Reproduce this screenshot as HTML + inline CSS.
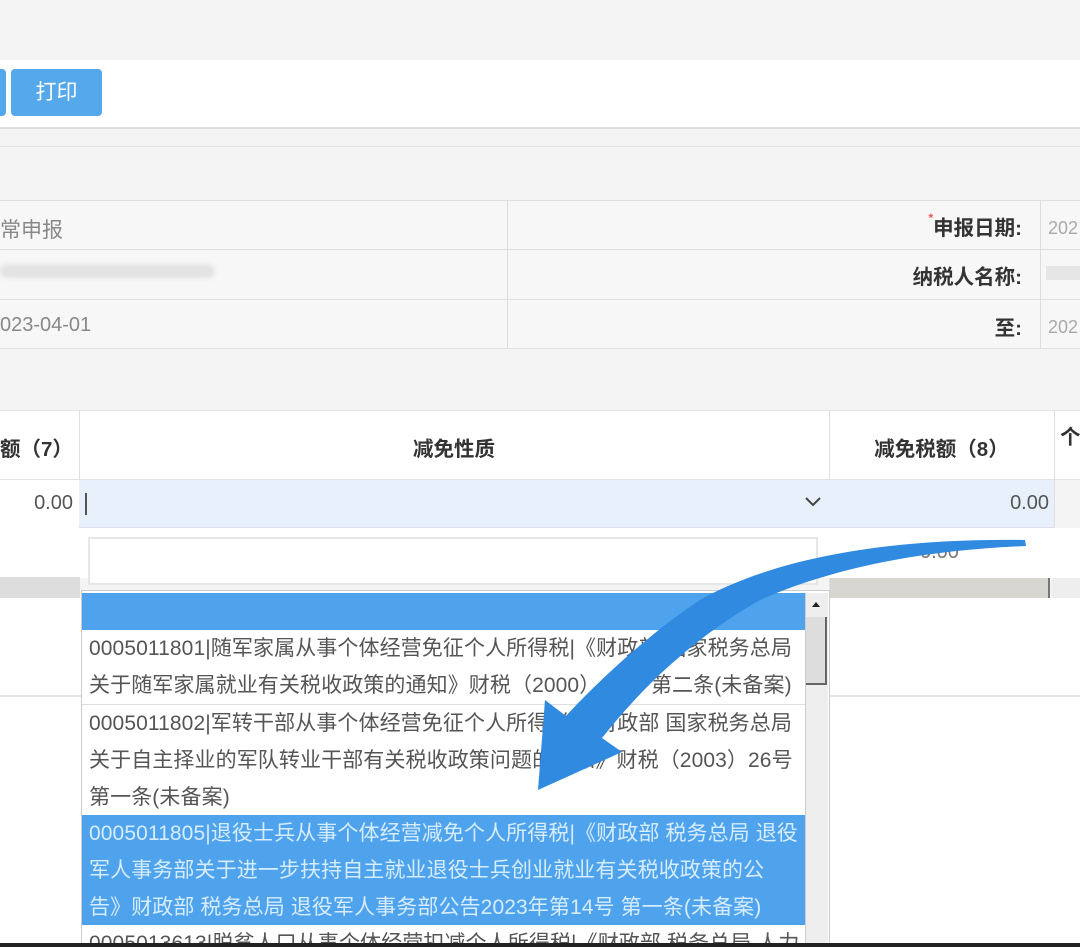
<!DOCTYPE html>
<html><head><meta charset="utf-8"><style>
*{margin:0;padding:0;box-sizing:border-box}
body{width:1080px;height:947px;overflow:hidden;background:#f4f4f4;position:relative;font-family:"Liberation Sans","Noto Sans CJK SC",sans-serif;color:#444}
.a{position:absolute}
.lbl{font-weight:bold;color:#333;font-size:20.5px;text-align:right}
.it{font-size:21px;line-height:37px;color:#555;padding-left:7px;white-space:nowrap;overflow:hidden;letter-spacing:0.1px}
</style></head><body>
<div class="a" style="left:0;top:60px;width:1080px;height:69px;background:#fff;border-bottom:2px solid #ddd"></div>
<div class="a" style="left:0;top:69px;width:6px;height:47px;background:#55a8ea;border-radius:0 4px 4px 0"></div>
<div class="a" style="left:11px;top:69px;width:91px;height:47px;background:#55a8ea;border-radius:4px;color:#fff;font-size:21px;line-height:47px;text-align:center">打印</div>
<div class="a" style="left:0;top:146px;width:1080px;height:1px;background:#e2e2e2"></div>
<div class="a" style="left:0;top:200px;width:1080px;height:149px;background:#f7f7f7;border-top:1px solid #e0e0e0;border-bottom:1px solid #e0e0e0"></div>
<div class="a" style="left:0;top:249px;width:1080px;height:1px;background:#e0e0e0"></div>
<div class="a" style="left:0;top:299px;width:1080px;height:1px;background:#e0e0e0"></div>
<div class="a" style="left:507px;top:200px;width:1px;height:149px;background:#ddd"></div>
<div class="a" style="left:1040px;top:200px;width:1px;height:149px;background:#ddd"></div>
<div class="a" style="left:0;top:214px;font-size:21px;color:#888">常申报</div>
<div class="a" style="left:0;top:264px;width:215px;height:14px;background:#e3e3e3;border-radius:7px;filter:blur(2px)"></div>
<div class="a" style="left:0;top:314px;font-size:20px;color:#888">023-04-01</div>
<div class="a lbl" style="left:800px;top:211px;width:222px"><span style="color:#e55;font-size:12px;vertical-align:top">*</span>申报日期:</div>
<div class="a lbl" style="left:800px;top:260px;width:222px">纳税人名称:</div>
<div class="a lbl" style="left:800px;top:311px;width:222px">至:</div>
<div class="a" style="left:1048px;top:218px;font-size:18px;color:#aaa">202</div>
<div class="a" style="left:1046px;top:266px;width:34px;height:14px;background:#e6e6e6"></div>
<div class="a" style="left:1048px;top:317px;font-size:18px;color:#aaa">202</div>
<div class="a" style="left:0;top:410px;width:1080px;height:70px;background:#fff;border-top:1px solid #e4e4e4;border-bottom:1px solid #e4e4e4"></div>
<div class="a" style="left:79px;top:410px;width:1px;height:190px;background:#e0e0e0"></div>
<div class="a" style="left:829px;top:410px;width:1px;height:190px;background:#e0e0e0"></div>
<div class="a" style="left:1054px;top:410px;width:1px;height:170px;background:#e0e0e0"></div>
<div class="a lbl" style="left:0;top:432px;text-align:left">额（7）</div>
<div class="a lbl" style="left:79px;top:432px;width:750px;text-align:center">减免性质</div>
<div class="a lbl" style="left:829px;top:432px;width:225px;text-align:center">减免税额（8）</div>
<div class="a lbl" style="left:1060px;top:420px;text-align:left">个</div>
<div class="a" style="left:0;top:480px;width:1054px;height:48px;background:#e8f0fb;border-bottom:1px solid #dde"></div>
<div class="a" style="left:0;top:480px;width:79px;height:48px;background:#fff"></div>
<div class="a" style="left:0;top:492px;width:73px;text-align:right;font-size:20px;color:#555">0.00</div>
<div class="a" style="left:85px;top:493px;width:2px;height:22px;background:#555"></div>
<svg class="a" style="left:804px;top:496px" width="18" height="12"><path d="M2 2L9 9L16 2" stroke="#444" stroke-width="2" fill="none"/></svg>
<div class="a" style="left:829px;top:492px;width:220px;text-align:right;font-size:20px;color:#555">0.00</div>
<div class="a" style="left:0;top:528px;width:1080px;height:50px;background:#fff"></div>
<div class="a" style="left:88px;top:537px;width:730px;height:48px;background:#fff;border:2px solid #e6e6e6"></div>
<div class="a" style="left:920px;top:541px;font-size:20px;color:#777">0.00</div>
<div class="a" style="left:0;top:577px;width:80px;height:21px;background:#ddd"></div>
<div class="a" style="left:830px;top:578px;width:220px;height:22px;background:#d7d5cf;border-right:2px solid #777;border-bottom:2px solid #777"></div>
<div class="a" style="left:1052px;top:578px;width:28px;height:22px;background:#eee"></div>
<div class="a" style="left:0;top:598px;width:1080px;height:97px;background:#fff"></div>
<div class="a" style="left:0;top:695px;width:1080px;height:2px;background:#e4e4e4"></div>
<div class="a" style="left:0;top:697px;width:1080px;height:250px;background:#fff"></div>
<div class="a" style="left:81px;top:590px;width:749px;height:357px;background:#fff;border:1px solid #ccc"></div>
<div class="a" style="left:82px;top:593px;width:723px;height:37px;background:#4fa3ec"></div>
<div class="a" style="left:805px;top:593px;width:23px;height:354px;background:#eee;border-left:1px solid #ccc"></div>
<div class="a" style="left:806px;top:617px;width:21px;height:68px;background:#ddd;border-right:2px solid #666;border-bottom:2px solid #666"></div>
<svg class="a" style="left:809px;top:598px" width="14" height="12"><path d="M3 9L7 4L11 9Z" fill="#222"/></svg>
<div class="a it" style="left:82px;top:630px;width:723px;height:75px;border-bottom:1px solid #ddd">0005011801|随军家属从事个体经营免征个人所得税|《财政部 国家税务总局<br>关于随军家属就业有关税收政策的通知》财税（2000）84号 第二条(未备案)</div>
<div class="a it" style="left:82px;top:705px;width:723px;height:110px">0005011802|军转干部从事个体经营免征个人所得税|《财政部 国家税务总局<br>关于自主择业的军队转业干部有关税收政策问题的通知》财税（2003）26号<br>第一条(未备案)</div>
<div class="a it" style="left:82px;top:815px;width:723px;height:110px;background:#4fa3ec;color:#d6ecff">0005011805|退役士兵从事个体经营减免个人所得税|《财政部 税务总局 退役<br>军人事务部关于进一步扶持自主就业退役士兵创业就业有关税收政策的公<br>告》财政部 税务总局 退役军人事务部公告2023年第14号 第一条(未备案)</div>
<div class="a it" style="left:82px;top:925px;width:723px;height:22px;line-height:37px">0005013613|脱贫人口从事个体经营扣减个人所得税|《财政部 税务总局 人力</div>
<div class="a" style="left:0;top:943px;width:1080px;height:4px;background:#222"></div>
<svg class="a" style="left:0;top:0" width="1080" height="947">
<path d="M1025 540 C 900 538, 780 555, 700 600 C 640 640, 590 690, 566 716 L 545 700 L 538 790 L 622 752 L 602 738 C 640 690, 690 640, 760 600 C 840 565, 930 550, 1026 546 Z" fill="#2f8ae0"/>
</svg>
</body></html>
